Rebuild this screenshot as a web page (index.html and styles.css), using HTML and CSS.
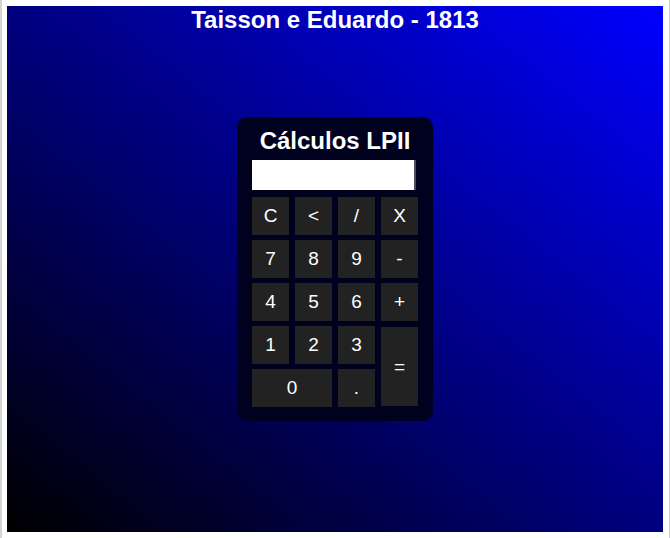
FILE: index.html
```html
<!DOCTYPE html>
<html lang="pt">
<head>
<meta charset="utf-8">
<title>Calculadora</title>
<link rel="stylesheet" href="styles.css">
</head>
<body>
<div class="frame">
  <main class="stage">
    <h1 class="page-title">Taisson e Eduardo - 1813</h1>
    <section class="calc">
      <h2 class="calc-title">Cálculos LPII</h2>
      <input class="display" type="text" value="">
      <div class="keys">
        <button class="key">C</button>
        <button class="key">&lt;</button>
        <button class="key">/</button>
        <button class="key">X</button>
        <button class="key">7</button>
        <button class="key">8</button>
        <button class="key">9</button>
        <button class="key">-</button>
        <button class="key">4</button>
        <button class="key">5</button>
        <button class="key">6</button>
        <button class="key">+</button>
        <button class="key">1</button>
        <button class="key">2</button>
        <button class="key">3</button>
        <button class="key key-eq">=</button>
        <button class="key key-zero">0</button>
        <button class="key">.</button>
      </div>
    </section>
  </main>
</div>
</body>
</html>
```

FILE: styles.css
```css
html, body {
  margin: 0;
  padding: 0;
  background: #ffffff;
}

.frame {
  height: 538px;
  box-sizing: border-box;
  border-left: 2px solid #d4d4d4;
  border-right: 1px solid #d4d4d4;
  padding: 6px 6px 6px 5px;
}

.stage {
  height: 526px;
  display: grid;
  grid-template-areas: "all";
  background: linear-gradient(to top right, #000000, #0000ff);
  font-family: "Liberation Sans", Arial, sans-serif;
  color: #ffffff;
}

.page-title {
  grid-area: all;
  align-self: start;
  justify-self: center;
  margin: 0;
  font-size: 24px;
  line-height: 28px;
  font-weight: bold;
}

.calc {
  grid-area: all;
  align-self: center;
  justify-self: center;
  width: 196px;
  box-sizing: border-box;
  background: #00001f;
  border-radius: 10px;
  padding: 10px 15px 14px 15px;
  display: flex;
  flex-direction: column;
}

.calc-title {
  margin: 0;
  text-align: center;
  font-size: 24px;
  line-height: 28px;
  font-weight: bold;
}

.display {
  margin: 5px 0 7px 0;
  width: 164px;
  height: 30px;
  box-sizing: border-box;
  border: none;
  border-right: 2px solid #4c4c5c;
  background: #ffffff;
  padding: 0 4px;
  font: 18px "Liberation Sans", Arial, sans-serif;
}

.keys {
  display: grid;
  grid-template-columns: repeat(4, 37px);
  grid-auto-rows: 38px;
  column-gap: 6px;
  row-gap: 5px;
}

.key {
  margin: 0;
  border: none;
  padding: 0;
  background: #222222;
  color: #ffffff;
  font: 19px "Liberation Sans", Arial, sans-serif;
}

.key-eq {
  grid-row: span 2;
  margin: 1px 0;
}

.key-zero {
  grid-column: span 2;
}
```
